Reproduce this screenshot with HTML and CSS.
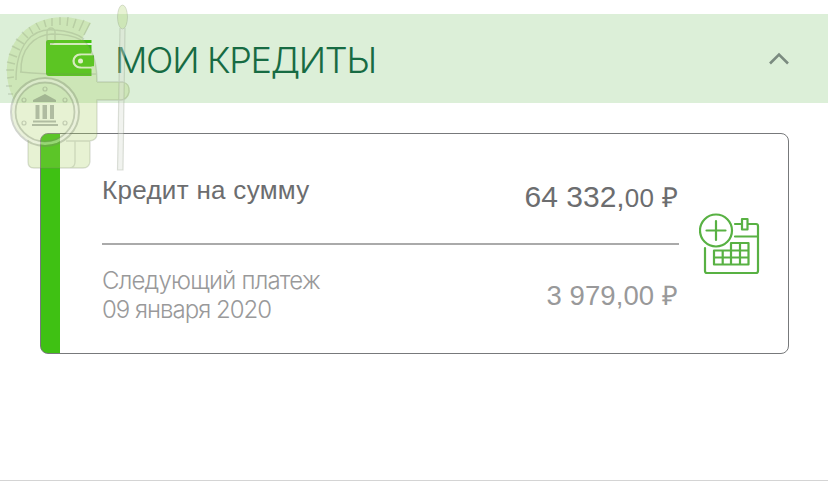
FILE: index.html
```html
<!DOCTYPE html>
<html lang="ru">
<head>
<meta charset="utf-8">
<title>Мои кредиты</title>
<link rel="stylesheet" href="styles.css">
</head>
<body>
<main class="page">
  <header class="section-head">
    <svg class="wallet" width="48" height="37" viewBox="0 0 48 37">
      <path d="M2 0H45.500V36H3Q0 36 0 33V2Q0 0 2 0Z" fill="#3fc10c"/>
      <path d="M4 4H46" stroke="#e4f3e0" stroke-width="2"/>
      <path d="M48 14.500H34a6.500 6.500 0 0 0 0 13H46" fill="#3fc10c" stroke="#e9f6e4" stroke-width="2.200"/>
      <path d="M35 15.600H48V26.400H35Z" fill="#3fc10c"/>
      <path d="M45.500 26.400H48V29H45.500ZM45.500 12H48V15H45.500Z" fill="#dcefd8"/>
      <circle cx="34.500" cy="21" r="2.500" fill="#f4fbf0"/>
    </svg>
    <h1 class="title">МОИ КРЕДИТЫ</h1>
    <svg class="chevron" width="22" height="14" viewBox="0 0 22 14"><path d="M2 11.500L11 2.500L20 11.500" fill="none" stroke="#7b8b80" stroke-width="2.600"/></svg>
  </header>
  <section class="card">
    <div class="details">
      <div class="row row-main">
        <span class="name">Кредит на сумму</span>
        <span class="sum">64 332,<span class="kop">00 <span class="rub">₽</span></span></span>
      </div>
      <div class="row row-next">
        <p class="next">Следующий платеж<br><span class="date">09 января 2020</span></p>
        <span class="payment">3 979,00 <span class="rub">₽</span></span>
      </div>
    </div>
    <svg class="calendar" width="62" height="62" viewBox="0 0 62 62" fill="none" stroke="#58b143" stroke-width="2.200" stroke-linecap="round" stroke-linejoin="round">
      <circle cx="17" cy="17.500" r="16"/>
      <path d="M17 8V27M7.500 17.500H26.500"/>
      <path d="M36 11H43M49 11H57Q59 11 59 13V58Q59 60 57 60H8Q6 60 6 58V35M36 23.500H59"/>
      <rect x="43" y="6" width="5.500" height="10.500"/>
      <path d="M32 30H49.500V51.500H15V37.500H49.500M15 44.500H49.500M23.700 37.500V51.500M32 30V51.500M41 30V51.500"/>
    </svg>
  </section>
  <svg class="watermark" width="140" height="180" viewBox="0 0 140 180">
    <g fill="#a8d060" opacity=".28">
      <path d="M14 100C5 82 3 58 17 39C33 16 65 12 91 23L82 39C91 46 97 60 97 79V82H123Q130 83 130 91Q129 99 122 100H97V134Q97 140 90 141V162Q89 168 83 168H33Q28 168 28 162V140C15 132 11 119 12 109Z"/>
      <ellipse cx="122.500" cy="17" rx="5" ry="12"/>
    </g>
    <path d="M120 28H125L123 170H117.500Z" fill="#dde2d6" opacity=".4"/>
    <g fill="none" stroke="#77846c" opacity=".24">
      <path d="M16 80C16 45 32 28 54 30C69 31 78 34 84 39M21 72C20 49 34 35 52 34C64 34 74 36 81 40M82 39C91 46 97 60 97 82" stroke-width="1.500"/>
      <path d="M20 72Q50 75 96 74M97 82H123Q130 84 129 92Q127 100 121 100H97V134Q97 140 90 141H66M28 140V162Q28 168 34 168H83Q89 168 90 162V141M75 141V162Q75 167 70 168" stroke-width="1.300"/>
      <path d="M13 94L8 94M12 86L6 86M7 78L14 77M6 70L14 70M7 62L15 64M9 54L17 57M12 46L20 50M16 39L24 44M22 32L28 38M29 27L33 34M36 23L40 30M44 20L46 27M52 18V26M60 17V25M68 17L67 26M76 19L73 28M84 20L79 31M90 23L84 35" stroke-width="1.500"/>
      <rect x="47" y="28" width="8" height="16" rx="4" stroke-width="1.400"/>
      <ellipse cx="122.500" cy="17" rx="5" ry="12"/>
      <path d="M120 28L117.500 170H123L125 28" stroke-width="1.200"/>
    </g>
    <circle cx="45" cy="112" r="31.500" fill="none" stroke="#eef1e6" stroke-width="3" opacity=".4"/>
    <g fill="none" stroke="#78836e" opacity=".34">
      <circle cx="45" cy="112" r="34" stroke-width="2"/>
      <circle cx="45" cy="112" r="29.500" stroke-width="1.800"/>
      <g stroke-width="1.200"><circle cx="45" cy="89" r="2"/><circle cx="24" cy="100" r="2"/><circle cx="65" cy="100" r="2"/><circle cx="24" cy="123" r="2"/><circle cx="65" cy="123" r="2"/></g>
    </g>
    <path d="M45 94L56 100V102H33V100ZM35.500 105H39.500V119H35.500ZM42.500 105H47V119H42.500ZM50 105H54V119H50ZM33 120.500H56V122.500H33ZM32 124H58V126H32Z" fill="#6e7d67" opacity=".45"/>
  </svg>
</main>
</body>
</html>
```

FILE: styles.css
```css
* { box-sizing: border-box; }
body { margin: 0; background: #fff; font-family: "Liberation Sans", Arial, sans-serif; }
.page { position: relative; height: 481px; padding-top: 14px; border-bottom: 1px solid #d4d4d4; }
.section-head { display: flex; align-items: center; height: 89px; padding: 0 38px 0 46px; background: #dcefd8; }
.wallet { flex: none; }
.title { margin: 2px 0 0 21px; font: 300 36px/44px Inter, "Liberation Sans", sans-serif; letter-spacing: -1.3px; color: #176b43; white-space: nowrap; }
.chevron { margin-left: auto; }
.card { display: flex; width: 749px; height: 221px; margin: 30px 0 0 40px; border: 1px solid #77797b; border-radius: 8px; background: linear-gradient(90deg, #3fc113 19px, #fff 19px); }
.details { width: 577px; margin-left: 61px; }
.row { display: flex; justify-content: space-between; white-space: nowrap; }
.row-main { height: 111px; padding-top: 40px; border-bottom: 2px solid #aaa; color: #6c6d6f; }
.name { font-size: 26px; line-height: 32px; letter-spacing: 0.3px; }
.sum { padding: 6px 1px 0 0; font-size: 30px; line-height: 34px; }
.kop { font-size: 26px; letter-spacing: 0.4px; }
.row-next { padding-top: 21px; color: #99999a; }
.next { margin: 0; font: 300 24px/29px Inter, "Liberation Sans", sans-serif; letter-spacing: -0.8px; }
.date { letter-spacing: -1px; }
.payment { padding: 13px 1px 0 0; font-size: 27.5px; line-height: 34px; letter-spacing: 0.1px; }
.rub { font-size: 27.5px; letter-spacing: 0; }
.calendar { margin: 79px 0 0 20px; flex: none; }
.row-next .rub { font-size: 27px; }
.watermark { position: absolute; top: 0; left: 0; pointer-events: none; filter: blur(0.35px); }
```
